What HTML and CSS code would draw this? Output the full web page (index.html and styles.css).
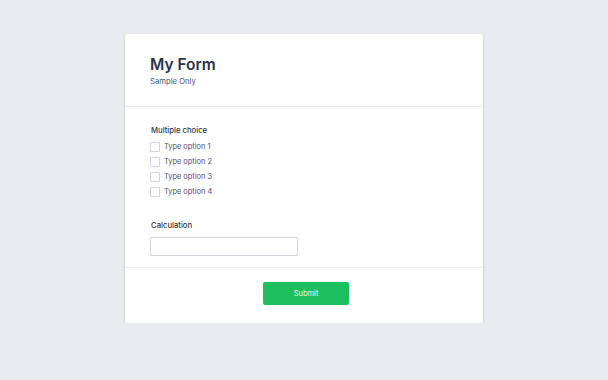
FILE: index.html
```html
<!DOCTYPE html>
<html lang="en">
<head>
    <meta charset="UTF-8">
    <title>My Form</title>
    <link rel="stylesheet" href="styles.css">
</head>
<body>
<div class="form-card">
    <div class="form-head">
        <h1>My Form</h1>
        <p>Sample Only</p>
    </div>
    <div class="form-body">
        <div class="field">
            <div class="label">Multiple choice</div>
            <ul class="choices">
                <li><span class="check"></span>Type option 1</li>
                <li><span class="check"></span>Type option 2</li>
                <li><span class="check"></span>Type option 3</li>
                <li><span class="check"></span>Type option 4</li>
            </ul>
        </div>
        <div class="field calc">
            <div class="label">Calculation</div>
            <div class="input"></div>
        </div>
    </div>
    <div class="form-foot">
        <button class="submit">Submit</button>
    </div>
</div>
</body>
</html>
```

FILE: styles.css
```css
* {
    margin: 0;
    padding: 0;
    box-sizing: border-box;
}

body {
    background-color: #eaebf1;
    font-family: Inter, "Liberation Sans", sans-serif;
    padding-top: 34px;
}

ul {
    list-style: none;
}

.form-card {
    width: 358px;
    height: 289px;
    margin: 0 auto;
    background-color: #fff;
    border-radius: 2px;
    box-shadow: 0 1px 3px rgba(60, 70, 110, 0.22);
}

.form-head {
    height: 73px;
    padding: 20px 25px 0;
    border-bottom: 1px solid #e6e8ee;
}

.form-head h1 {
    font-size: 15.5px;
    line-height: 22px;
    font-weight: 600;
    color: #2d3248;
}

.form-head p {
    font-size: 7.7px;
    line-height: 12px;
    color: #4b5576;
}

.form-body {
    height: 161px;
    padding: 18px 25px 0;
    border-bottom: 1px solid #eef0f4;
}

.label {
    font-size: 7.7px;
    line-height: 12px;
    font-weight: 500;
    color: #2e3349;
    margin-left: 1px;
}

.choices {
    margin-top: 2px;
}

.choices li {
    display: flex;
    align-items: center;
    height: 15px;
    font-size: 7.4px;
    color: #4a5170;
}

.check {
    width: 10px;
    height: 10px;
    border: 1px solid #cfd3dc;
    border-radius: 1px;
    margin-right: 4px;
}

.calc {
    margin-top: 21px;
}

.input {
    width: 148px;
    height: 19px;
    margin-top: 5px;
    border: 1px solid #cfd3dc;
    border-radius: 2px;
}

.form-foot {
    display: flex;
    justify-content: center;
    padding: 14px 0 0 4px;
}

.submit {
    width: 86px;
    height: 23px;
    border: none;
    border-radius: 2px;
    background-color: #1cbf5d;
    color: #eafaf0;
    font-family: Inter, "Liberation Sans", sans-serif;
    font-size: 7.5px;
}
```
